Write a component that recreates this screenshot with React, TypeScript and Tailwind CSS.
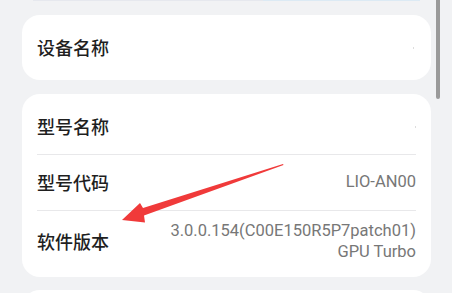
import React from "react";

export default function App() {
  const font = { fontFamily: '"Noto Sans CJK SC", "Noto Sans", sans-serif' };
  const num = { fontFamily: 'Roboto, "Noto Sans", sans-serif' };
  return (
    <div className="relative w-[452px] h-[293px] overflow-hidden bg-[#f1f2f4]" style={font}>
      <div className="flex flex-col px-[22px] pr-[21px]">
        <div className="mx-[11px] h-[2px] -mt-[1px] rounded-b bg-[#e3e8ef] flex">
          <div className="w-[230px] bg-[#e6e8ee]" />
          <div className="flex-1 bg-[#dceaf4]" />
        </div>
        <div className="mt-[14px] h-[65px] rounded-[18px] bg-white flex items-center justify-between px-[15px]">
          <span className="text-[18px] font-medium text-[#1f1f1f]">设备名称</span>
          <span className="w-[1px] h-[2px] bg-[#ddd] mr-[2px]" />
        </div>
        <div className="mt-[14px] rounded-[18px] bg-white px-[15px] pt-[5px] pb-[6px] flex flex-col">
          <div className="h-[55px] flex items-center justify-between">
            <span className="text-[18px] font-medium text-[#1f1f1f]">型号名称</span>
            <span className="w-[1px] h-[2px] bg-[#ddd]" />
          </div>
          <div className="h-[1px] bg-[#e8e8ea]" />
          <div className="h-[55px] flex items-center justify-between">
            <span className="text-[18px] font-medium text-[#1f1f1f]">型号代码</span>
            <span className="text-[16.5px] text-[#777]" style={num}>LIO-AN00</span>
          </div>
          <div className="h-[1px] bg-[#e8e8ea]" />
          <div className="h-[60px] flex items-center justify-between">
            <span className="text-[18px] font-medium text-[#1f1f1f]">软件版本</span>
            <div className="flex flex-col items-end text-[16.5px] leading-[21px] text-[#777]" style={num}>
              <span>3.0.0.154(C00E150R5P7patch01)</span>
              <span>GPU Turbo</span>
            </div>
          </div>
        </div>
        <div className="mt-[13px] h-[40px] rounded-t-[18px] bg-white" />
      </div>
      <div className="absolute left-[436px] top-0 w-[4px] h-[99px] rounded-b-full bg-[#9a9a9a]" />
      <svg className="absolute left-0 top-0" width="452" height="293" viewBox="0 0 452 293">
        <path
          d="M283 164 L143 208 L140 203 L122 220 L145 222.5 L144 215.5 L283.5 165 Z"
          fill="#f03a3a"
        />
      </svg>
    </div>
  );
}
